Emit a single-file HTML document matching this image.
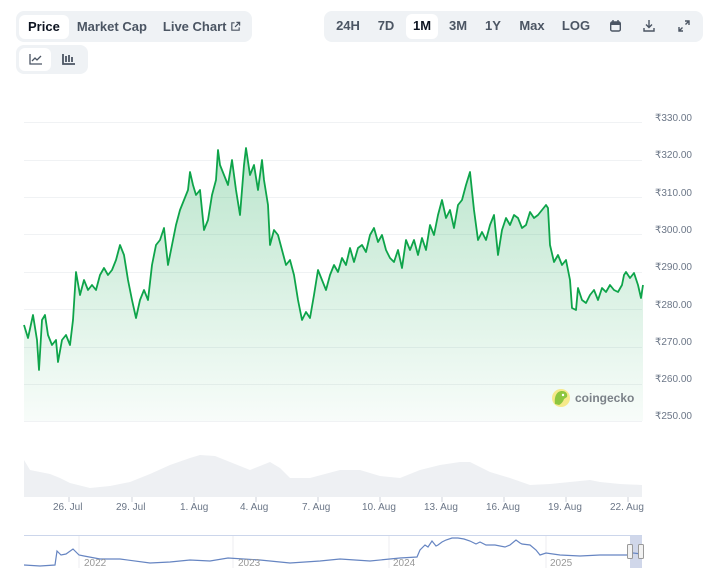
<!DOCTYPE html>
<html><head><meta charset="utf-8"><style>
*{margin:0;padding:0;box-sizing:border-box}
body{width:710px;height:577px;background:#fff;font-family:"Liberation Sans",sans-serif;position:relative;overflow:hidden;color:#4b5563}
.grp{position:absolute;background:#eff2f5;border-radius:8px;display:flex;align-items:center;padding:3px}
.b{font-size:13px;font-weight:bold;color:#4b5563;padding:0 8px;height:24px;line-height:24px;border-radius:6px}
.b.on{background:#fff;color:#0d1421}
.t{position:absolute;top:17px;font-size:13px;font-weight:bold;color:#4b5563;width:40px;text-align:center;line-height:18px}
.ic{position:absolute;top:17px;width:20px;height:18px;display:flex;justify-content:center;align-items:center}
.yl{position:absolute;left:655px;font-size:10px;color:#6b7687}
.xl{position:absolute;top:502px;font-size:10px;color:#6b7687}
</style></head><body>
<div class="grp" style="left:16px;top:11px;height:31px">
<div class="b on" style="padding:0 9px">Price</div><div class="b">Market Cap</div><div class="b">Live Chart <svg width="11" height="11" viewBox="0 0 12 12" style="vertical-align:-1px"><path d="M5 2H2v8h8V7M7 1.5h3.5V5M10.5 1.5L5.5 6.5" fill="none" stroke="#4b5563" stroke-width="1.3"/></svg></div>
</div>
<div class="grp" style="left:16px;top:45px;height:29px">
<div class="b on" style="width:32px;height:23px;padding:0;display:flex;align-items:center;justify-content:center"><svg width="13" height="11" viewBox="0 0 13 11"><path d="M1 0v10h12M3 7l3-3 2 2 4-4" fill="none" stroke="#4b5563" stroke-width="1.3"/></svg></div>
<div style="width:34px;display:flex;justify-content:center"><svg width="13" height="11" viewBox="0 0 13 11"><path d="M1 0v10h12M4 2v6M7 1v7M10 3v5" fill="none" stroke="#4b5563" stroke-width="1.8"/></svg></div>
</div>
<div class="grp" style="left:324px;top:11px;height:31px;width:379px"></div>
<div style="position:absolute;left:406px;top:14px;width:32px;height:25px;background:#fff;border-radius:6px"></div>
<div class="t" style="left:328px">24H</div><div class="t" style="left:366px">7D</div><div class="t" style="left:402px;color:#0d1421">1M</div><div class="t" style="left:438px">3M</div><div class="t" style="left:473px">1Y</div><div class="t" style="left:512px">Max</div><div class="t" style="left:556px">LOG</div>
<div class="ic" style="left:605px"><svg width="11" height="12" viewBox="0 0 11 12"><rect x="0.7" y="2" width="9.6" height="9" rx="1.5" fill="none" stroke="#4b5563" stroke-width="1.4"/><rect x="0.7" y="2" width="9.6" height="3" fill="#4b5563"/><path d="M3 0v3M8 0v3" stroke="#4b5563" stroke-width="1.4"/></svg></div>
<div class="ic" style="left:639px"><svg width="12" height="12" viewBox="0 0 12 12"><path d="M6 0v7M3 4.5L6 7.5 9 4.5M1 8v3h10V8" fill="none" stroke="#4b5563" stroke-width="1.4"/></svg></div>
<div class="ic" style="left:674px"><svg width="12" height="12" viewBox="0 0 12 12"><path d="M7 1h4v4M11 1L7.5 4.5M5 11H1V7M1 11l3.5-3.5" fill="none" stroke="#4b5563" stroke-width="1.4"/></svg></div>

<svg width="710" height="577" style="position:absolute;left:0;top:0">
<defs><linearGradient id="g" x1="0" y1="0" x2="0" y2="1"><stop offset="0" stop-color="#0ba34a" stop-opacity="0.28"/><stop offset="1" stop-color="#0ba34a" stop-opacity="0.03"/></linearGradient></defs>
<g stroke="#f0f2f4" stroke-width="1">
<line x1="24" x2="642" y1="122.5" y2="122.5"/><line x1="24" x2="642" y1="160.5" y2="160.5"/><line x1="24" x2="642" y1="197.5" y2="197.5"/><line x1="24" x2="642" y1="234.5" y2="234.5"/><line x1="24" x2="642" y1="272.5" y2="272.5"/><line x1="24" x2="642" y1="309.5" y2="309.5"/><line x1="24" x2="642" y1="347.5" y2="347.5"/><line x1="24" x2="642" y1="384.5" y2="384.5"/><line x1="24" x2="642" y1="421.5" y2="421.5"/>
</g>
<path d="M24,325 28,338 33,315 37,340 39,370 42,320 45,315 48,335 52,345 56,340 58,362 62,340 66,335 70,345 73,320 76,272 80,295 84,280 88,290 92,285 96,290 100,275 104,268 108,275 112,270 116,260 120,245 124,255 128,280 132,300 136,318 140,300 144,290 148,300 152,265 156,245 160,240 164,228 168,265 172,245 176,225 180,210 184,200 188,190 190,172 193,185 196,195 200,190 204,230 208,220 212,195 216,180 218,150 220,165 224,175 228,185 232,160 236,190 240,215 244,165 246,148 250,175 254,165 258,190 262,160 264,180 268,205 270,245 274,230 278,235 282,250 286,265 290,260 294,275 298,300 302,320 306,312 310,318 314,295 318,270 322,280 326,290 330,275 334,265 338,272 342,258 346,265 350,248 354,262 358,248 362,245 366,252 370,235 374,228 378,242 382,235 386,250 390,258 394,262 398,250 402,268 406,240 410,250 414,240 418,255 422,238 426,250 430,225 434,235 438,215 442,200 446,218 450,210 454,228 458,205 462,200 466,185 470,172 474,210 478,240 482,232 486,240 490,225 494,215 498,255 502,230 506,218 510,225 514,215 518,218 522,228 526,225 530,212 534,218 538,215 542,210 546,205 548,208 550,245 554,262 558,255 562,265 566,260 570,280 572,308 576,310 578,288 582,300 586,303 590,295 594,290 598,300 602,288 606,292 610,285 614,290 618,292 622,285 624,275 626,272 630,278 634,273 638,285 641,298 643,285 L643,421 L24,421Z" fill="url(#g)"/>
<polyline points="24,325 28,338 33,315 37,340 39,370 42,320 45,315 48,335 52,345 56,340 58,362 62,340 66,335 70,345 73,320 76,272 80,295 84,280 88,290 92,285 96,290 100,275 104,268 108,275 112,270 116,260 120,245 124,255 128,280 132,300 136,318 140,300 144,290 148,300 152,265 156,245 160,240 164,228 168,265 172,245 176,225 180,210 184,200 188,190 190,172 193,185 196,195 200,190 204,230 208,220 212,195 216,180 218,150 220,165 224,175 228,185 232,160 236,190 240,215 244,165 246,148 250,175 254,165 258,190 262,160 264,180 268,205 270,245 274,230 278,235 282,250 286,265 290,260 294,275 298,300 302,320 306,312 310,318 314,295 318,270 322,280 326,290 330,275 334,265 338,272 342,258 346,265 350,248 354,262 358,248 362,245 366,252 370,235 374,228 378,242 382,235 386,250 390,258 394,262 398,250 402,268 406,240 410,250 414,240 418,255 422,238 426,250 430,225 434,235 438,215 442,200 446,218 450,210 454,228 458,205 462,200 466,185 470,172 474,210 478,240 482,232 486,240 490,225 494,215 498,255 502,230 506,218 510,225 514,215 518,218 522,228 526,225 530,212 534,218 538,215 542,210 546,205 548,208 550,245 554,262 558,255 562,265 566,260 570,280 572,308 576,310 578,288 582,300 586,303 590,295 594,290 598,300 602,288 606,292 610,285 614,290 618,292 622,285 624,275 626,272 630,278 634,273 638,285 641,298 643,285" fill="none" stroke="#0ea44a" stroke-width="1.8" stroke-linejoin="round"/>
<path d="M24,460 30,470 50,474 60,478 70,483 90,488 110,486 130,482 150,474 170,465 190,458 200,455 215,456 230,462 250,470 260,466 270,462 280,468 290,478 310,478 340,470 360,470 380,476 400,478 420,470 440,465 460,462 470,462 490,472 510,478 530,485 550,484 570,482 590,480 600,482 620,484 642,485 642,497 24,497Z" fill="#eef0f3"/>
<g stroke="#ccd1d8"><line x1="69" x2="69" y1="497" y2="502"/><line x1="132" x2="132" y1="497" y2="502"/><line x1="194" x2="194" y1="497" y2="502"/><line x1="256" x2="256" y1="497" y2="502"/><line x1="318" x2="318" y1="497" y2="502"/><line x1="380" x2="380" y1="497" y2="502"/><line x1="442" x2="442" y1="497" y2="502"/><line x1="504" x2="504" y1="497" y2="502"/><line x1="566" x2="566" y1="497" y2="502"/><line x1="628" x2="628" y1="497" y2="502"/></g>
<line x1="24" x2="642" y1="535.5" y2="535.5" stroke="#ccd6eb"/>
<g stroke="#eceef2"><line x1="79" x2="79" y1="536" y2="568"/><line x1="233" x2="233" y1="536" y2="568"/><line x1="389" x2="389" y1="536" y2="568"/><line x1="546" x2="546" y1="536" y2="568"/></g>
<rect x="630" y="536" width="12" height="32" fill="#d0d7ea"/>
<polyline points="24,565 40,566 55,565 57,551 61,555 66,554 73,549 79,555 84,556 100,559 120,559 150,563 170,562 190,560 210,561 228,558 260,560 290,563 320,561 340,559 370,561 400,558 417,557 420,550 425,545 428,547 432,541 436,546 438,545 442,542 446,540 452,538 458,538 464,539 470,541 476,544 480,542 486,545 495,545 505,547 510,545 516,540 520,543 522,544 530,545 536,550 540,555 546,553 560,555 580,556 600,555 620,555 628,555 633,553 642,554" fill="none" stroke="#6685c2" stroke-width="1.2"/>
<rect x="627.5" y="544.5" width="5" height="14" rx="1" fill="#f2f2f2" stroke="#999"/><rect x="638.5" y="544.5" width="5" height="14" rx="1" fill="#f2f2f2" stroke="#999"/>
<circle cx="561" cy="398" r="9" fill="#f6e98a"/><path d="M555,404 C554,396 557,391 562,391 C566,391 568,394 567,397 L564,399 C563,402 561,404 559,405Z" fill="#8dc63f"/><circle cx="563" cy="395" r="1.2" fill="#fff"/>
<text x="575" y="402" font-family="Liberation Sans" font-size="12" font-weight="bold" fill="#7b8188">coingecko</text>
<g font-family="Liberation Sans" font-size="10" fill="#999"><text x="84" y="566">2022</text><text x="238" y="566">2023</text><text x="393" y="566">2024</text><text x="550" y="566">2025</text></g>
</svg>
<div class="yl" style="top:113px">₹330.00</div><div class="yl" style="top:150px">₹320.00</div><div class="yl" style="top:188px">₹310.00</div><div class="yl" style="top:225px">₹300.00</div><div class="yl" style="top:262px">₹290.00</div><div class="yl" style="top:300px">₹280.00</div><div class="yl" style="top:337px">₹270.00</div><div class="yl" style="top:374px">₹260.00</div><div class="yl" style="top:411px">₹250.00</div>
<div class="xl" style="left:53px">26. Jul</div><div class="xl" style="left:116px">29. Jul</div><div class="xl" style="left:180px">1. Aug</div><div class="xl" style="left:240px">4. Aug</div><div class="xl" style="left:302px">7. Aug</div><div class="xl" style="left:362px">10. Aug</div><div class="xl" style="left:424px">13. Aug</div><div class="xl" style="left:486px">16. Aug</div><div class="xl" style="left:548px">19. Aug</div><div class="xl" style="left:610px">22. Aug</div>
</body></html>
